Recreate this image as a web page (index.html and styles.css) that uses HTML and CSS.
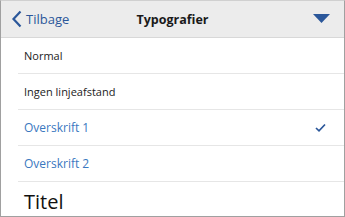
FILE: index.html
```html
<!DOCTYPE html>
<html>
<head>
    <title>Typografier</title>
    <link rel="stylesheet" href="styles.css">
</head>
<body>
    <div class="styles-pane">
        <div class="top-bar">
            <a class="back" href="#">
                <svg width="11" height="18" viewBox="0 0 11 18"><path d="M9.5 1.5 L2.5 9 L9.5 16.5" fill="none" stroke="#2b579a" stroke-width="2.2"/></svg>
                <span>Tilbage</span>
            </a>
            <h2>Typografier</h2>
            <svg class="drop" width="17" height="10" viewBox="0 0 17 10"><path d="M0 0 H17 L8.5 9 Z" fill="#2b579a"/></svg>
        </div>
        <ul class="style-list">
            <li class="style-row normal">Normal</li>
            <li class="style-row normal">Ingen linjeafstand</li>
            <li class="style-row heading1">Overskrift 1
                <svg width="11" height="9" viewBox="0 0 11 9"><path d="M1 5 L4 7.8 L10 1.5" fill="none" stroke="#2b579a" stroke-width="1.7"/></svg>
            </li>
            <li class="style-row heading2">Overskrift 2</li>
            <li class="style-row title">Titel</li>
        </ul>
    </div>
</body>
</html>
```

FILE: styles.css
```css
body {
    margin: 0;
    font-family: "Open Sans", sans-serif;
}

.styles-pane {
    width: 345px;
    height: 217px;
    box-sizing: border-box;
    border: 1px solid #a0a0a0;
    border-top-color: #d0d0d0;
    overflow: hidden;
    background-color: #fff;
}

.top-bar {
    height: 36px;
    background-color: #ececec;
    border-bottom: 1px solid #d8d8d8;
    display: flex;
    align-items: center;
    position: relative;
}

.back {
    display: flex;
    align-items: center;
    gap: 4px;
    padding-left: 10px;
    color: #2b579a;
    text-decoration: none;
    font-size: 13px;
}

.top-bar h2 {
    position: absolute;
    left: 0;
    right: 0;
    margin: 0;
    text-align: center;
    font-size: 12.5px;
    font-weight: bold;
    color: #1a1a1a;
    pointer-events: none;
}

.drop {
    margin-left: auto;
    margin-right: 14px;
}

.style-list {
    list-style: none;
    margin: 0;
    padding: 0 0 0 17px;
}

.style-row {
    height: 35px;
    display: flex;
    align-items: center;
    justify-content: space-between;
    padding: 0 18px 0 6px;
    border-bottom: 1px solid #e6e6e6;
    font-size: 11px;
    color: #222;
}

.heading1, .heading2 {
    font-size: 12px;
    color: #3a78c0;
}

.title {
    height: 38px;
    font-size: 20px;
    color: #111;
    border-bottom: none;
}
```
